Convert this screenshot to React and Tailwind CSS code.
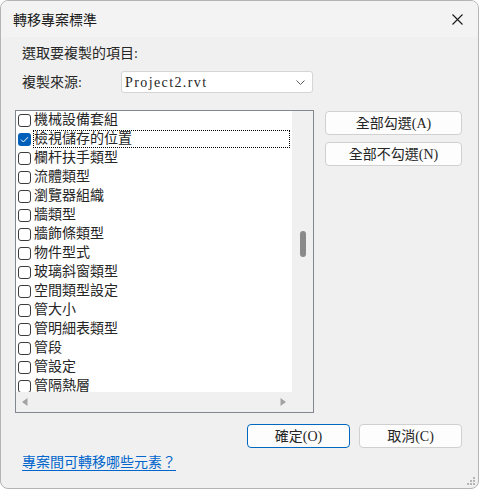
import React, { useState } from 'react';

const ITEMS = [
  '機械設備套組',
  '檢視儲存的位置',
  '欄杆扶手類型',
  '流體類型',
  '瀏覽器組織',
  '牆類型',
  '牆飾條類型',
  '物件型式',
  '玻璃斜窗類型',
  '空間類型設定',
  '管大小',
  '管明細表類型',
  '管段',
  '管設定',
  '管隔熱層',
];

const FONT = 'font-["Liberation_Serif","Noto_Sans_CJK_TC",serif]';

function CheckBox({ checked }) {
  if (checked) {
    return (
      <span className="mt-[3px] flex h-[13px] w-[13px] shrink-0 items-center justify-center rounded-[3px] bg-[#005fb8]">
        <svg width="9" height="7" viewBox="0 0 9 7" fill="none">
          <path d="M1 3.6 L3.4 6 L8 1.2" stroke="#ffffff" strokeWidth="1" />
        </svg>
      </span>
    );
  }
  return (
    <span className="mt-[3px] h-[13px] w-[13px] shrink-0 rounded-[3px] border border-[#3c3c3c] bg-white" />
  );
}

function Button({ children, primary, className = '' }) {
  return (
    <button
      className={
        'flex h-[24px] items-center justify-center rounded-[4px] bg-[#fdfdfd] text-[14px] text-[#262626] ' +
        (primary ? 'border border-[#0067c0] ' : 'border border-[#d0d0d0] ') +
        className
      }
    >
      {children}
    </button>
  );
}

export default function App() {
  const [checked] = useState({ 1: true });

  return (
    <div className={`relative flex h-[489px] w-[479px] flex-col overflow-hidden rounded-[8px] border border-[#b4b4b4] bg-[#f0f0f0] text-[#262626] ${FONT}`}>
      {/* 標題列 */}
      <div className="flex h-[36px] shrink-0 items-center justify-between bg-[#f3f3f3] pl-[12px] pr-[15px]">
        <span className="text-[14px] leading-none font-['Noto_Sans_CJK_TC',sans-serif] text-[#1a1a1a]">轉移專案標準</span>
        <svg width="11" height="11" viewBox="0 0 11 11">
          <path d="M0.5 0.5 L10.5 10.5 M10.5 0.5 L0.5 10.5" stroke="#1a1a1a" strokeWidth="1.1" />
        </svg>
      </div>

      <div className="flex flex-col pl-[14px] pr-[16px]">
        <div className="mt-[7px] h-[20px] pl-[7px] text-[14px] leading-[20px]">選取要複製的項目:</div>

        <div className="mt-[7px] flex h-[22px] items-center">
          <span className="w-[106px] pl-[7px] text-[14px]">複製來源:</span>
          <div className="flex h-[22px] w-[192px] items-center justify-between rounded-[3px] border border-[#d5d5d5] bg-white pl-[3px] pr-[7px]">
            <span className="text-[14px] tracking-[1.4px] text-[#262626]">Project2.rvt</span>
            <svg width="9" height="5" viewBox="0 0 9 5" fill="none">
              <path d="M0.5 0.5 L4.5 4.5 L8.5 0.5" stroke="#606060" strokeWidth="1" />
            </svg>
          </div>
        </div>

        <div className="mt-[17px] flex">
          {/* 清單 */}
          <div className="flex h-[303px] w-[299px] flex-col border border-[#828790] bg-[#f0f0f0]">
            <div className="flex h-[281px]">
              <div className="h-full w-[276px] overflow-hidden bg-white pl-[2px]">
                {ITEMS.map((name, i) => (
                  <div key={name} className="flex h-[19px] items-start gap-[2px]">
                    <CheckBox checked={!!checked[i]} />
                    <span
                      className={
                        'flex h-[18px] flex-1 items-center text-[14px] leading-none ' +
                        (i === 1 ? 'mr-[2px] border border-dotted border-black' : 'border border-transparent')
                      }
                    >
                      {name}
                    </span>
                  </div>
                ))}
              </div>
              <div className="flex flex-1 justify-center">
                <div className="mt-[120px] h-[26px] w-[6px] rounded-[3px] bg-[#8a8a8a]" />
              </div>
            </div>
            <div className="flex h-[20px] items-center pl-[6px]">
              <div className="flex w-[264px] items-center justify-between">
                <svg width="6" height="8" viewBox="0 0 6 8">
                  <path d="M5.5 0 L0 4 L5.5 8 Z" fill="#a3a3a3" />
                </svg>
                <svg width="6" height="8" viewBox="0 0 6 8">
                  <path d="M0.5 0 L6 4 L0.5 8 Z" fill="#a3a3a3" />
                </svg>
              </div>
            </div>
          </div>

          {/* 右側按鈕 */}
          <div className="ml-[11px] flex flex-col gap-[7px] pt-[1px]">
            <Button className="w-[137px]">全部勾選(A)</Button>
            <Button className="w-[137px]">全部不勾選(N)</Button>
          </div>
        </div>

        <div className="mt-[11px] flex justify-end gap-[9px]">
          <Button primary className="w-[103px]">確定(O)</Button>
          <Button className="w-[103px]">取消(C)</Button>
        </div>

        <div className="mt-[5px] h-[20px] pl-[7px] text-[14px] leading-[20px]">
          <span className="text-[#0066cc] underline underline-offset-[3px]">專案間可轉移哪些元素？</span>
        </div>
      </div>

      {/* 縮放握把 */}
      <svg className="absolute bottom-[2px] right-[2px]" width="10" height="10" viewBox="0 0 10 10">
        <rect x="7" y="1" width="2" height="2" fill="#b5b5b5" />
        <rect x="4" y="4" width="2" height="2" fill="#b5b5b5" />
        <rect x="7" y="4" width="2" height="2" fill="#b5b5b5" />
        <rect x="1" y="7" width="2" height="2" fill="#b5b5b5" />
        <rect x="4" y="7" width="2" height="2" fill="#b5b5b5" />
        <rect x="7" y="7" width="2" height="2" fill="#b5b5b5" />
      </svg>
    </div>
  );
}
